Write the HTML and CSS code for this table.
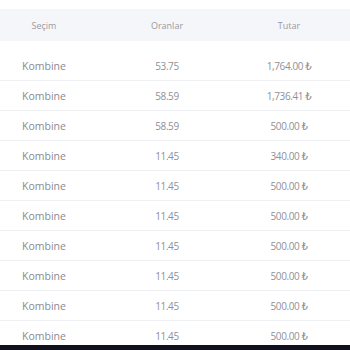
FILE: index.html
```html
<!DOCTYPE html>
<html lang="tr">
<head>
<meta charset="utf-8">
<link rel="stylesheet" href="styles.css">
</head>
<body>
<div class="table">
  <div class="head">
    <div class="c1">Seçim</div>
    <div class="c2">Oranlar</div>
    <div class="c3">Tutar</div>
  </div>
  <div class="body">
    <div class="row"><div class="c1">Kombine</div><div class="c2">53.75</div><div class="c3">1,764.00 ₺</div></div>
    <div class="row"><div class="c1">Kombine</div><div class="c2">58.59</div><div class="c3">1,736.41 ₺</div></div>
    <div class="row"><div class="c1">Kombine</div><div class="c2">58.59</div><div class="c3">500.00 ₺</div></div>
    <div class="row"><div class="c1">Kombine</div><div class="c2">11.45</div><div class="c3">340.00 ₺</div></div>
    <div class="row"><div class="c1">Kombine</div><div class="c2">11.45</div><div class="c3">500.00 ₺</div></div>
    <div class="row"><div class="c1">Kombine</div><div class="c2">11.45</div><div class="c3">500.00 ₺</div></div>
    <div class="row"><div class="c1">Kombine</div><div class="c2">11.45</div><div class="c3">500.00 ₺</div></div>
    <div class="row"><div class="c1">Kombine</div><div class="c2">11.45</div><div class="c3">500.00 ₺</div></div>
    <div class="row"><div class="c1">Kombine</div><div class="c2">11.45</div><div class="c3">500.00 ₺</div></div>
    <div class="row"><div class="c1">Kombine</div><div class="c2">11.45</div><div class="c3">500.00 ₺</div></div>
  </div>
</div>
<div class="bottombar"></div>
</body>
</html>
```
FILE: styles.css
```css
html, body {
  margin: 0;
  padding: 0;
  background: #ffffff;
  font-family: "Open Sans", "DejaVu Sans", sans-serif;
  color: #8a8a92;
}
.table {
  padding-top: 9px;
}
.head, .row {
  display: grid;
  grid-template-columns: 88px 158px 86px 1fr;
  align-items: center;
  text-align: center;
}
.head {
  height: 32px;
  background: #f5f6fa;
  font-size: 9px;
  color: #9a9aa2;
}
.body {
  padding-top: 10px;
}
.row {
  height: 30px;
  box-sizing: border-box;
  border-bottom: 1px solid #eff0f4;
  font-size: 10.5px;
  color: #8a8a92;
}
.row .c2, .row .c3 {
  font-size: 10px;
  letter-spacing: -0.4px;
  color: #909098;
}
.bottombar {
  position: fixed;
  left: 0;
  right: 0;
  bottom: 0;
  height: 5px;
  background: #10101f;
}
```
